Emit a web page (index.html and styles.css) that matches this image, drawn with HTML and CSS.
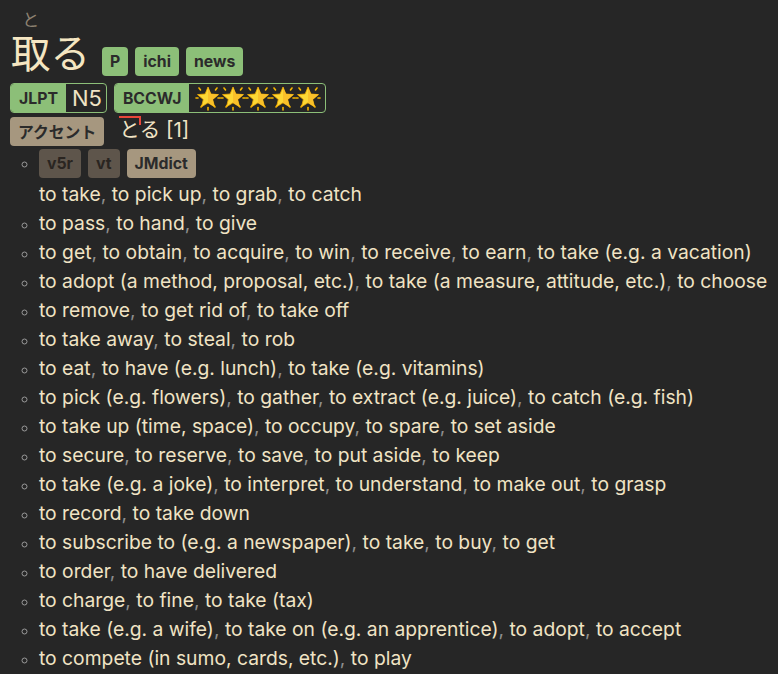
FILE: index.html
```html
<!DOCTYPE html>
<html>
<head>
<meta charset="utf-8">
<link rel="stylesheet" href="styles.css">
</head>
<body>
<svg width="0" height="0" class="defs">
  <defs>
    <symbol id="star" viewBox="0 0 26 26">
      <g stroke="#f5b400" stroke-width="1.6" stroke-linecap="round">
        <line x1="4" y1="3" x2="5.5" y2="5"/>
        <line x1="22" y1="3" x2="20.5" y2="5"/>
        <line x1="1" y1="13" x2="3" y2="13"/>
        <line x1="25" y1="13" x2="23" y2="13"/>
        <line x1="13" y1="22.5" x2="13" y2="25"/>
        <line x1="6" y1="22" x2="7" y2="20.5"/>
        <line x1="20" y1="22" x2="19" y2="20.5"/>
      </g>
      <polygon points="13,2 15.9,9 23.5,9.6 17.7,14.5 19.5,21.8 13,17.8 6.5,21.8 8.3,14.5 2.5,9.6 10.1,9" fill="#fdd835" stroke="#f0a800" stroke-width="0.8" stroke-linejoin="round"/>
      <polygon points="13,17.8 19.5,21.8 17.7,14.5 23.5,9.6 15.9,9 13,2 13,12" fill="#f9c02a"/>
    </symbol>
  </defs>
</svg>
<div class="entry">
  <div class="head-row">
    <div class="headword"><span class="furi-group"><span class="furi">と</span><span class="base">取</span></span><span class="base">る</span></div>
    <div class="tags">
      <span class="tag green">P</span>
      <span class="tag green">ichi</span>
      <span class="tag green">news</span>
    </div>
  </div>
  <div class="freq-row">
    <div class="pair">
      <span class="pair-label">JLPT</span><span class="pair-value">N5</span>
    </div>
    <div class="pair">
      <span class="pair-label">BCCWJ</span><span class="pair-value stars"><svg class="star"><use href="#star"/></svg><svg class="star"><use href="#star"/></svg><svg class="star"><use href="#star"/></svg><svg class="star"><use href="#star"/></svg><svg class="star"><use href="#star"/></svg></span>
    </div>
  </div>
  <div class="accent-row">
    <span class="tag tan">アクセント</span>
    <span class="pitch"><span class="high-drop">と</span>る <span class="num">[1]</span></span>
  </div>
  <ul class="senses">
    <li>
      <div class="sense-tags">
        <span class="tag brown">v5r</span>
        <span class="tag brown">vt</span>
        <span class="tag tan">JMdict</span>
      </div>
      <div class="gloss">to take<span class="sep">, </span>to pick up<span class="sep">, </span>to grab<span class="sep">, </span>to catch</div>
    </li>
    <li>to pass<span class="sep">, </span>to hand<span class="sep">, </span>to give</li>
    <li>to get<span class="sep">, </span>to obtain<span class="sep">, </span>to acquire<span class="sep">, </span>to win<span class="sep">, </span>to receive<span class="sep">, </span>to earn<span class="sep">, </span>to take (e.g. a vacation)</li>
    <li>to adopt (a method, proposal, etc.)<span class="sep">, </span>to take (a measure, attitude, etc.)<span class="sep">, </span>to choose</li>
    <li>to remove<span class="sep">, </span>to get rid of<span class="sep">, </span>to take off</li>
    <li>to take away<span class="sep">, </span>to steal<span class="sep">, </span>to rob</li>
    <li>to eat<span class="sep">, </span>to have (e.g. lunch)<span class="sep">, </span>to take (e.g. vitamins)</li>
    <li>to pick (e.g. flowers)<span class="sep">, </span>to gather<span class="sep">, </span>to extract (e.g. juice)<span class="sep">, </span>to catch (e.g. fish)</li>
    <li>to take up (time, space)<span class="sep">, </span>to occupy<span class="sep">, </span>to spare<span class="sep">, </span>to set aside</li>
    <li>to secure<span class="sep">, </span>to reserve<span class="sep">, </span>to save<span class="sep">, </span>to put aside<span class="sep">, </span>to keep</li>
    <li>to take (e.g. a joke)<span class="sep">, </span>to interpret<span class="sep">, </span>to understand<span class="sep">, </span>to make out<span class="sep">, </span>to grasp</li>
    <li>to record<span class="sep">, </span>to take down</li>
    <li>to subscribe to (e.g. a newspaper)<span class="sep">, </span>to take<span class="sep">, </span>to buy<span class="sep">, </span>to get</li>
    <li>to order<span class="sep">, </span>to have delivered</li>
    <li>to charge<span class="sep">, </span>to fine<span class="sep">, </span>to take (tax)</li>
    <li>to take (e.g. a wife)<span class="sep">, </span>to take on (e.g. an apprentice)<span class="sep">, </span>to adopt<span class="sep">, </span>to accept</li>
    <li>to compete (in sumo, cards, etc.)<span class="sep">, </span>to play</li>
  </ul>
</div>
</body>
</html>
```
FILE: styles.css
```css
html, body {
  margin: 0;
  padding: 0;
  background: #262626;
}
body {
  font-family: Inter, "Noto Sans CJK JP", sans-serif;
  color: #f0e3c4;
  font-size: 19.3px;
  overflow: hidden;
  height: 674px;
}
.defs {
  position: absolute;
}
.entry {
  padding: 0 10px 0 10px;
}
.head-row {
  display: flex;
  align-items: flex-end;
  padding-top: 8px;
}
.headword {
  display: flex;
  align-items: flex-end;
  font-family: "Noto Sans CJK JP", sans-serif;
  color: #f5e6c2;
  margin-left: 1px;
  margin-bottom: 3px;
}
.furi-group {
  display: flex;
  flex-direction: column;
  align-items: center;
}
.furi {
  font-size: 17px;
  line-height: 21px;
  color: #8d8271;
}
.base {
  font-size: 39.5px;
  line-height: 44px;
}
.tags {
  display: flex;
  gap: 7px;
  margin-left: 12px;
}
.tag {
  display: inline-flex;
  align-items: center;
  height: 29px;
  padding: 0 8px;
  border-radius: 4px;
  font-weight: 700;
  font-size: 15.8px;
  color: #2b2b2b;
  font-family: Inter, "Noto Sans CJK JP", sans-serif;
}
.green { background: #8cbf78; }
.tan { background: #a6977f; }
.brown { background: #5e554b; color: #2a2521; }
.freq-row {
  display: flex;
  gap: 7px;
  margin-top: 7px;
}
.pair {
  display: flex;
  height: 28px;
  border: 1px solid #8cbf78;
  border-radius: 4px;
  overflow: hidden;
}
.pair-label {
  background: #8cbf78;
  color: #2b2b2b;
  font-weight: 700;
  font-size: 15.8px;
  display: flex;
  align-items: center;
  padding: 0 8px;
}
.pair-value {
  display: flex;
  align-items: center;
  padding: 0 4px 0 6px;
  font-size: 22px;
  color: #f0e3c4;
}
.stars {
  padding: 0 5px 0 6px;
}
.star {
  width: 26px;
  height: 26px;
  margin-right: -1px;
}
.accent-row {
  display: flex;
  align-items: center;
  margin-top: 4px;
  gap: 15px;
}
.pitch {
  font-family: Inter, "Noto Sans CJK JP", sans-serif;
  font-size: 20.5px;
  line-height: 28px;
  position: relative;
  top: -2px;
}
.high-drop {
  position: relative;
  display: inline-block;
  border-top: 2px solid #e8473a;
  line-height: 24px;
}
.high-drop::after {
  content: "";
  position: absolute;
  right: -1px;
  top: -2px;
  width: 2px;
  height: 9px;
  background: #e8473a;
}
.senses {
  margin: 0;
  padding-left: 29px;
  list-style: circle;
  line-height: 29px;
}
.senses li::marker {
  color: #9a9a9a;
  font-size: 16px;
}
.sense-tags {
  display: flex;
  gap: 7px;
  padding-top: 3px;
  margin-bottom: 2px;
}
.sep {
  color: #8e8e8e;
}
```
